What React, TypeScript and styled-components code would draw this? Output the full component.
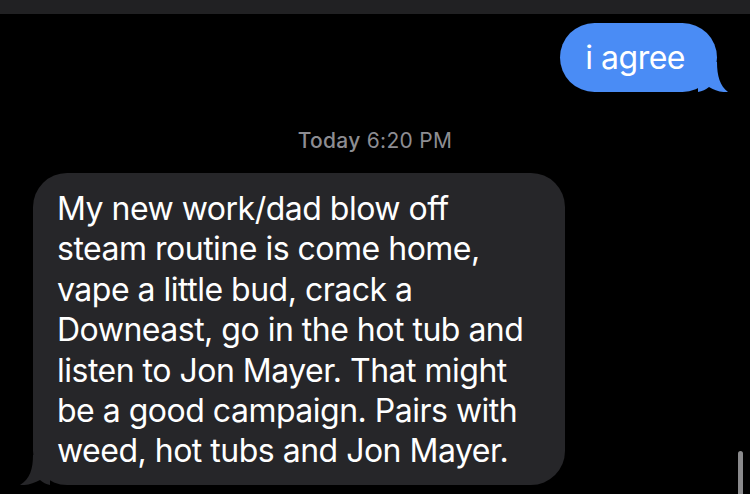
import React from "react";
import styled, { createGlobalStyle } from "styled-components";

const GlobalStyle = createGlobalStyle`
  html, body {
    margin: 0;
    padding: 0;
    background: #000;
  }
  body {
    font-family: Inter, "Noto Sans", "Liberation Sans", sans-serif;
    -webkit-font-smoothing: antialiased;
  }
`;

const lines = [
  "My new work/dad blow off",
  "steam routine is come home,",
  "vape a little bud, crack a",
  "Downeast, go in the hot tub and",
  "listen to Jon Mayer. That might",
  "be a good campaign. Pairs with",
  "weed, hot tubs and Jon Mayer.",
];

function App() {
  return (
    <>
      <GlobalStyle />
      <Screen>
        <TopBar />
        <Thread>
          <OutRow>
            <Bubble $variant="out">
              i agree
              <Tail $side="right" viewBox="0 0 30 30" aria-hidden>
                <path d="M0 0 L19 0 C19 14 22 24 30 30 C24 30.6 16 28.5 11 25 C8 27.5 4 29.5 0 30 Z" />
              </Tail>
            </Bubble>
          </OutRow>
          <Timestamp>
            <strong>Today</strong> 6:20 PM
          </Timestamp>
          <InRow>
            <Bubble $variant="in">
              {lines.map((l, i) => (
                <React.Fragment key={i}>
                  {l}
                  {i < lines.length - 1 && <br />}
                </React.Fragment>
              ))}
              <Tail $side="left" viewBox="0 0 30 30" aria-hidden>
                <path d="M30 0 L13 0 C13 14 10 24 0 30 C6 30.6 14 28.5 20 25 C23 27.5 26 29.5 30 30 Z" />
              </Tail>
            </Bubble>
          </InRow>
        </Thread>
        <ScrollIndicator />
      </Screen>
    </>
  );
}

export default App;

const Screen = styled.div`
  position: relative;
  width: 750px;
  height: 494px;
  overflow: hidden;
  background: #000;
  display: flex;
  flex-direction: column;
`;

const TopBar = styled.div`
  height: 14px;
  flex-shrink: 0;
  background: #212123;
`;

const Thread = styled.div`
  display: flex;
  flex-direction: column;
`;

const OutRow = styled.div`
  display: flex;
  justify-content: flex-end;
  padding: 9px 33px 0 0;
`;

const InRow = styled.div`
  display: flex;
  justify-content: flex-start;
  padding: 20px 0 0 33px;
`;

const Bubble = styled.div<{ $variant: "in" | "out" }>`
  position: relative;
  box-sizing: border-box;
  color: #fff;
  font-size: 32px;
  letter-spacing: -0.5px;
  ${({ $variant }) =>
    $variant === "out"
      ? `
    background: #4a8cf5;
    height: 69px;
    display: flex;
    align-items: center;
    padding: 0 32px 0 25px;
    border-radius: 35px;
    line-height: 38px;
  `
      : `
    background: #262629;
    width: 532px;
    padding: 16px 24px 13px;
    border-radius: 34px;
    line-height: 40.4px;
  `}
`;

const Tail = styled.svg<{ $side: "left" | "right" }>`
  position: absolute;
  bottom: 0;
  width: 30px;
  height: 30px;
  ${({ $side }) => ($side === "right" ? "right: -11px;" : "left: -13px;")}
  fill: ${({ $side }) => ($side === "right" ? "#4a8cf5" : "#262629")};
`;

const Timestamp = styled.div`
  margin-top: 36px;
  text-align: center;
  color: #8d8d92;
  font-size: 21px;
  letter-spacing: 0.3px;
  line-height: 25px;
  strong {
    font-weight: 500;
  }
`;

const ScrollIndicator = styled.div`
  position: absolute;
  left: 738px;
  top: 451px;
  width: 5px;
  height: 60px;
  border-radius: 3px;
  background: #8a8a8c;
`;
